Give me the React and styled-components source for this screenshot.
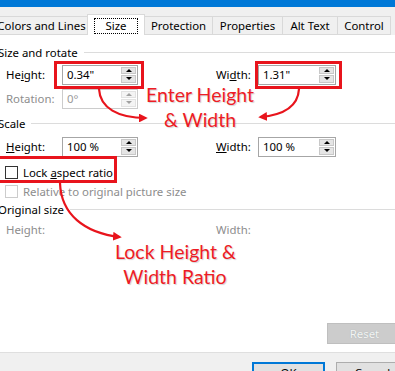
import React from "react";
import styled, { createGlobalStyle } from "styled-components";

const GlobalStyle = createGlobalStyle`
  html, body {
    margin: 0;
    padding: 0;
    background: #ffffff;
    overflow: hidden;
  }
  body {
    font-family: "Noto Sans", "Open Sans", "Liberation Sans", sans-serif;
    font-size: 11.4px;
    color: #000;
  }
`;

const Dialog = styled.div`
  position: relative;
  width: 395px;
  height: 371px;
  overflow: hidden;
  display: flex;
  flex-direction: column;
`;

const TitleStrip = styled.div`
  flex-shrink: 0;
  height: 7px;
  background: #0078d7;
`;

const TabStrip = styled.div`
  flex-shrink: 0;
  height: 28px;
  background: #f0f0f0;
  display: flex;
  align-items: flex-end;
  margin-left: -4px;
`;

const Tab = styled.div`
  width: ${p => p.$w}px;
  height: ${p => (p.$active ? 21 : 19)}px;
  box-sizing: border-box;
  border: 1px solid #d9d9d9;
  border-bottom: ${p => (p.$active ? "none" : "1px solid #d9d9d9")};
  margin-left: -1px;
  background: ${p => (p.$active ? "#ffffff" : "#f0f0f0")};
  display: flex;
  align-items: center;
  justify-content: center;
  white-space: nowrap;
  padding-top: ${p => (p.$active ? 1 : 0)}px;
`;

const FocusRing = styled.span`
  border: 1px dotted #000;
  padding: 0 11px;
  line-height: 14px;
`;

const Panel = styled.div`
  flex-shrink: 0;
  height: 317px;
  background: #ffffff;
  box-sizing: border-box;
  padding: 9px 0 8px 0;
  display: flex;
  flex-direction: column;
`;

const Legend = styled.div`
  display: flex;
  align-items: center;
  height: 16px;
  margin-left: -2px;
  margin-top: ${p => p.$mt || 0}px;
  white-space: nowrap;

  &::after {
    content: "";
    flex: 1;
    height: 1px;
    background: #dcdcdc;
    margin-left: 6px;
  }
`;

const FieldRow = styled.div`
  display: grid;
  grid-template-columns: 56px 76px 78px 42px 78px;
  align-items: center;
  padding-left: 6px;
  height: ${p => p.$h || 21}px;
  margin-top: ${p => p.$mt || 0}px;
`;

const Label = styled.span`
  color: ${p => (p.$dim ? "#8d8d8d" : "#000")};
  white-space: nowrap;
`;

const Callout = styled.div`
  position: relative;
  width: ${p => (p.$fit ? "max-content" : "auto")};

  &::after {
    content: "";
    position: absolute;
    top: ${p => p.$t}px;
    bottom: ${p => p.$b}px;
    left: ${p => p.$l}px;
    right: ${p => p.$r}px;
    border: 3px solid #e8141c;
    pointer-events: none;
  }
`;

const SpinBox = styled.div`
  height: 20px;
  box-sizing: border-box;
  border: 1px solid ${p => (p.$disabled ? "#cccccc" : "#a6a6a6")};
  background: #fff;
  display: flex;
  align-items: stretch;
`;

const SpinValue = styled.span`
  flex: 1;
  padding-left: 4px;
  line-height: 18px;
  color: ${p => (p.$disabled ? "#9a9a9a" : "#000")};
`;

const SpinButtons = styled.div`
  width: 15px;
  margin: 1px;
  display: flex;
  flex-direction: column;
  gap: 1px;
`;

const SpinButton = styled.div`
  flex: 1;
  background: ${p => (p.$disabled ? "#f4f4f4" : "#e5e5e5")};
  border: 1px solid ${p => (p.$disabled ? "#e2e2e2" : "#c8c8c8")};
  display: flex;
  align-items: center;
  justify-content: center;

  &::before {
    content: "";
    border-left: 3px solid transparent;
    border-right: 3px solid transparent;
    ${p => (p.$down ? "border-top" : "border-bottom")}: 3px solid
      ${p => (p.$disabled ? "#a0a0a0" : "#000")};
  }
`;

const CheckRow = styled.div`
  display: flex;
  align-items: center;
  gap: 5px;
  padding-left: 5px;
  height: 18px;
  width: max-content;
  margin-top: ${p => p.$mt || 0}px;
  color: ${p => (p.$dim ? "#8d8d8d" : "#000")};
`;

const Box = styled.span`
  width: 13px;
  height: 13px;
  box-sizing: border-box;
  border: 1px solid ${p => (p.$dim ? "#cccccc" : "#333333")};
  background: #fff;
`;

const Footer = styled.div`
  display: flex;
  justify-content: flex-end;
  margin-top: auto;
  margin-right: -7px;
`;

const Button = styled.div`
  flex-shrink: 0;
  width: ${p => p.$w || 73}px;
  height: 21px;
  box-sizing: border-box;
  display: flex;
  align-items: center;
  justify-content: center;
  background: ${p => (p.$disabled ? "#cccccc" : "#e1e1e1")};
  border: ${p =>
    p.$default ? "2px solid #0078d7" : p.$disabled ? "1px solid #bfbfbf" : "1px solid #adadad"};
  color: ${p => (p.$disabled ? "#f4f4f4" : "#000")};
  text-shadow: ${p => (p.$disabled ? "0 0 1px #9aa" : "none")};
`;

const ButtonBar = styled.div`
  flex: 1;
  min-height: 0;
  overflow: hidden;
  background: #f0f0f0;
  border-top: 1px solid #dfdfdf;
  display: flex;
  align-items: flex-start;
  gap: 11px;
  padding: 9px 0 0 252px;
`;

const Annotation = styled.div`
  position: absolute;
  left: ${p => p.$x}px;
  top: ${p => p.$y}px;
  width: ${p => p.$w}px;
  text-align: center;
  font-family: "Lato", "Open Sans", sans-serif;
  font-size: 19.5px;
  line-height: 25px;
  color: #ee1c25;
  text-shadow: 1px 1px 1px rgba(0, 0, 0, 0.18);
  white-space: nowrap;
`;

const Arrows = styled.svg`
  position: absolute;
  left: 0;
  top: 0;
  pointer-events: none;
`;

function Spin({ value, disabled }) {
  return (
    <SpinBox $disabled={disabled}>
      <SpinValue $disabled={disabled}>{value}</SpinValue>
      <SpinButtons>
        <SpinButton $disabled={disabled} />
        <SpinButton $disabled={disabled} $down />
      </SpinButtons>
    </SpinBox>
  );
}

const tabs = [
  ["Colors and Lines", 93],
  ["Size", 58],
  ["Protection", 69],
  ["Properties", 71],
  ["Alt Text", 56],
  ["Control", 54],
];

export default function App() {
  return (
    <>
      <GlobalStyle />
      <Dialog>
        <TitleStrip />
        <TabStrip>
          {tabs.map(([name, w]) => (
            <Tab key={name} $w={w} $active={name === "Size"}>
              {name === "Size" ? <FocusRing>{name}</FocusRing> : name}
            </Tab>
          ))}
        </TabStrip>

        <Panel>
          <Legend>Size and rotate</Legend>
          <FieldRow $mt={4}>
            <Label>He<u>i</u>ght:</Label>
            <Callout $t={-4} $b={-4} $l={-8} $r={-6}>
              <Spin value="0.34&quot;" />
            </Callout>
            <span />
            <Label>Wi<u>d</u>th:</Label>
            <Callout $t={-4} $b={-4} $l={-3} $r={-6}>
              <Spin value="1.31&quot;" />
            </Callout>
          </FieldRow>
          <FieldRow $mt={3}>
            <Label $dim>Rotation:</Label>
            <Spin value="0°" disabled />
          </FieldRow>

          <Legend $mt={6}>Scale</Legend>
          <FieldRow $mt={5}>
            <Label><u>H</u>eight:</Label>
            <Spin value="100 %" />
            <span />
            <Label><u>W</u>idth:</Label>
            <Spin value="100 %" />
          </FieldRow>

          <Callout $fit $t={-1} $b={-2} $l={-3} $r={-4}>
            <CheckRow $mt={6}>
              <Box />
              <span>Lock <u>a</u>spect ratio</span>
            </CheckRow>
          </Callout>
          <CheckRow $mt={1} $dim>
            <Box $dim />
            <span>Relative to original picture size</span>
          </CheckRow>

          <Legend $mt={1}>Original size</Legend>
          <FieldRow $mt={4} $h={16}>
            <Label $dim>Height:</Label>
            <span />
            <span />
            <Label $dim>Width:</Label>
          </FieldRow>

          <Footer>
            <Button $w={75} $disabled>Reset</Button>
          </Footer>
        </Panel>

        <ButtonBar>
          <Button $default>OK</Button>
          <Button>Cancel</Button>
        </ButtonBar>

        <Annotation $x={140} $y={82} $w={120}>
          Enter Height
          <br />& Width
        </Annotation>
        <Annotation $x={115} $y={239} $w={120}>
          Lock Height &amp;
          <br />
          Width Ratio
        </Annotation>

        <Arrows width="395" height="371" viewBox="0 0 395 371">
          <defs>
            <marker id="head" viewBox="0 0 10 10" refX="8" refY="5" markerWidth="4" markerHeight="4" orient="auto">
              <path d="M0 0 L10 5 L0 10 z" fill="#e8141c" />
            </marker>
          </defs>
          <g fill="none" stroke="#e8141c" strokeWidth="2.2" markerEnd="url(#head)">
            <path d="M99 89 C100 108 118 118 146 118" />
            <path d="M299 89 C298 106 285 115 260 117" />
            <path d="M60 183 C61 214 84 233 120 237" />
          </g>
        </Arrows>
      </Dialog>
    </>
  );
}
